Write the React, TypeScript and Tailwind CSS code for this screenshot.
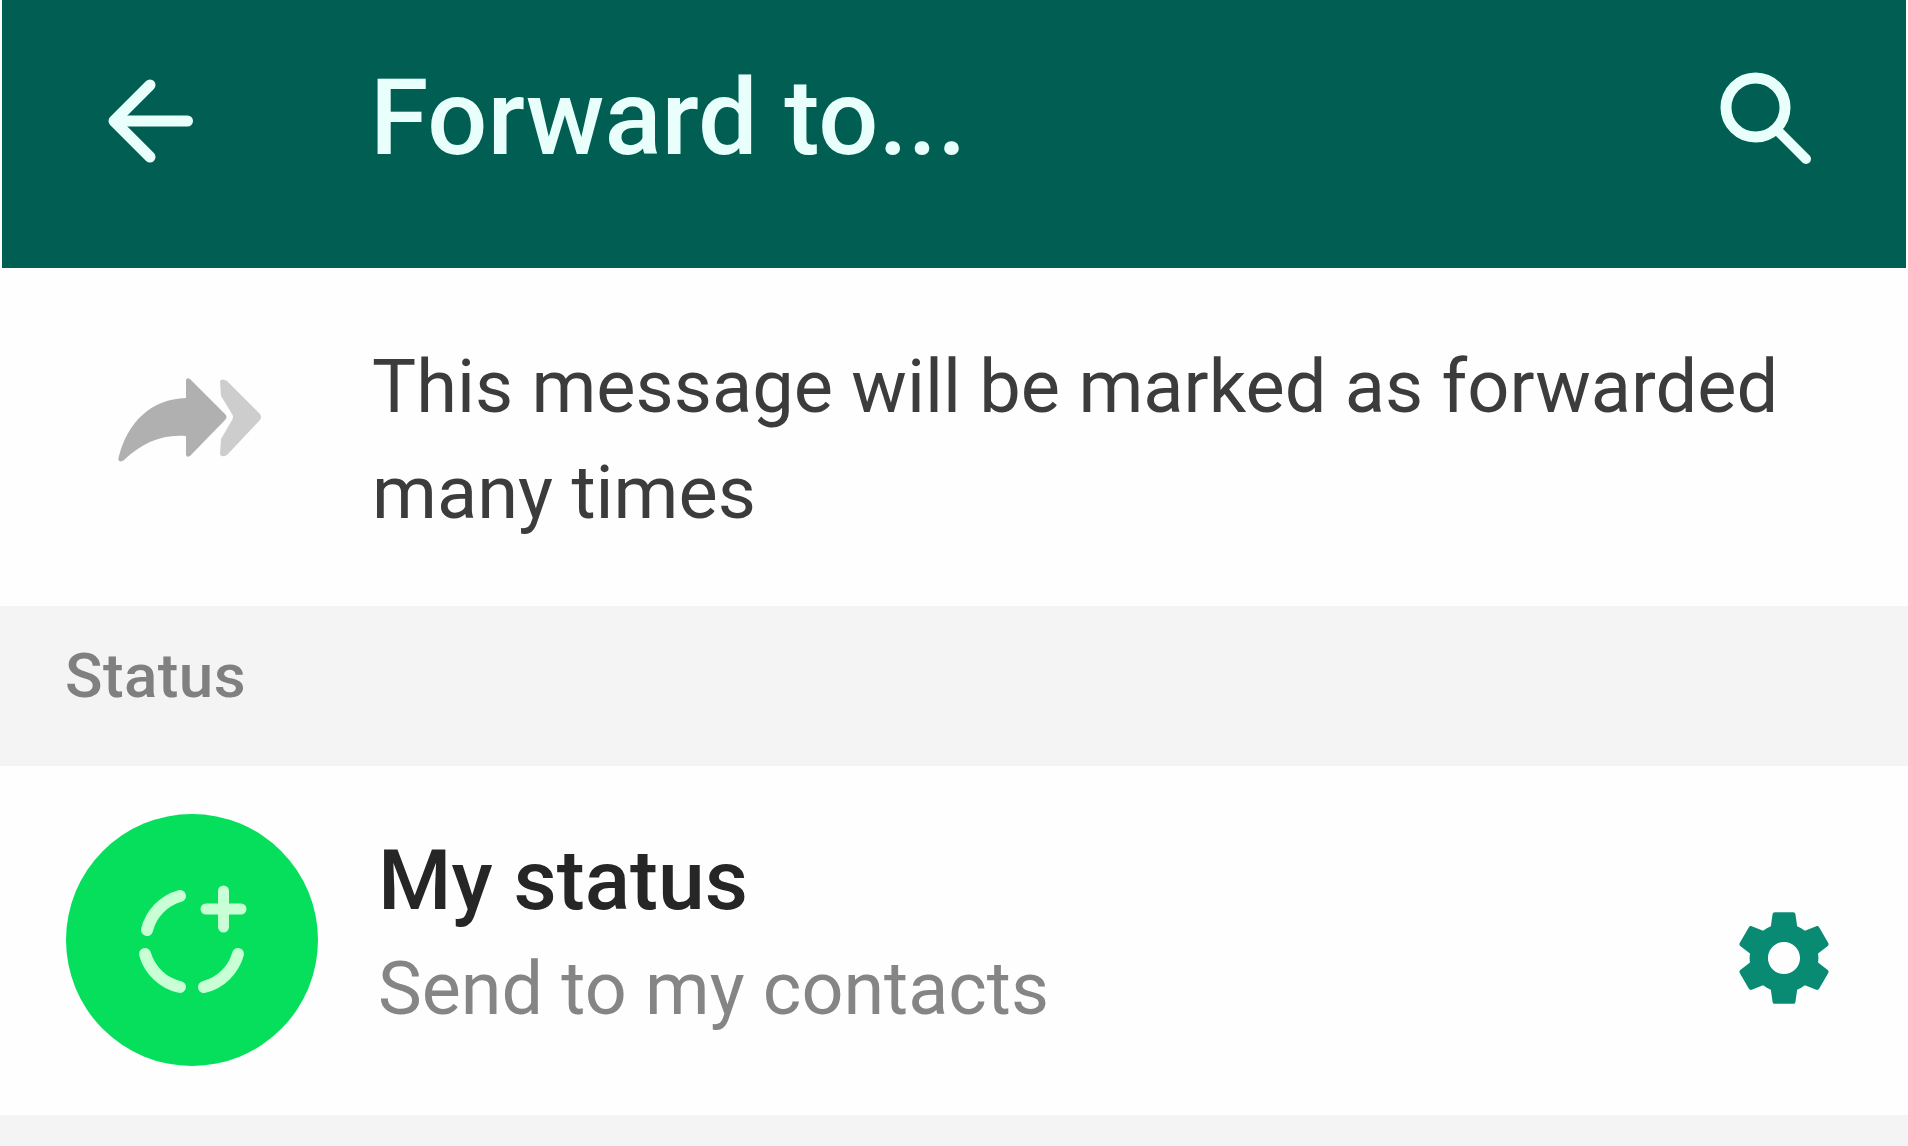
import type { ReactNode } from 'react';

function BackIcon() {
  return (
    <svg
      viewBox="0 0 96 96"
      className="w-[96px] h-[96px] shrink-0"
      fill="none"
      stroke="currentColor"
      strokeWidth="11"
    >
      <path d="M84.5 48H14" strokeLinecap="round" />
      <path d="M47 12 11 48l36 36" strokeLinejoin="round" strokeLinecap="round" />
    </svg>
  );
}

function SearchIcon() {
  return (
    <svg
      viewBox="0 0 100 100"
      className="w-[100px] h-[100px] shrink-0"
      fill="none"
      stroke="currentColor"
      strokeWidth="11"
    >
      <circle cx="39.5" cy="39.5" r="29.5" />
      <path d="m61 62 29 29" strokeWidth="10" strokeLinecap="round" />
    </svg>
  );
}

function ForwardedManyIcon() {
  return (
    <svg viewBox="0 0 150 90" className="w-[150px] h-[90px] shrink-0">
      <path
        d="M71 6Q72 3 75 5L110 40Q113 43 110 46L75 82Q72 84 71 81V62C48 60 28 68 9 86 5 89 2 87 4 82 13 48 36 25 71 24Z"
        fill="#b0b0b0"
      />
      <path
        d="M105 7Q107 4 112 7L145 40Q147 43 145 46L112 81Q106 84 105 80L106 65 117 46Q119 43 117 40L106 22Z"
        fill="#cdcdcd"
      />
    </svg>
  );
}

function StatusIcon() {
  return (
    <svg
      viewBox="0 0 110 110"
      className="w-[110px] h-[110px]"
      fill="none"
      stroke="currentColor"
      strokeWidth="12"
      strokeLinecap="round"
    >
      <path d="M10 45A47 47 0 0 1 43 11" />
      <path d="M8 69A47 47 0 0 0 43 102" />
      <path d="M67 102A47 47 0 0 0 101 69" />
      <path d="M86.5 6v36M69 24h35" strokeWidth="11" />
    </svg>
  );
}

function GearIcon() {
  return (
    <svg viewBox="0 0 24 24" className="w-[110px] h-[110px] shrink-0" fill="currentColor">
      <path d="M19.43 12.98c.04-.32.07-.64.07-.98s-.03-.66-.07-.98l2.11-1.65c.19-.15.24-.42.12-.64l-2-3.46c-.12-.22-.39-.3-.61-.22l-2.49 1c-.52-.4-1.08-.73-1.69-.98l-.38-2.65C14.46 2.18 14.25 2 14 2h-4c-.25 0-.46.18-.49.42l-.38 2.65c-.61.25-1.17.59-1.69.98l-2.49-1c-.23-.09-.49 0-.61.22l-2 3.46c-.13.22-.07.49.12.64l2.11 1.65c-.04.32-.07.65-.07.98s.03.66.07.98l-2.11 1.65c-.19.15-.24.42-.12.64l2 3.46c.12.22.39.3.61.22l2.49-1c.52.4 1.08.73 1.69.98l.38 2.65c.03.24.24.42.49.42h4c.25 0 .46-.18.49-.42l.38-2.65c.61-.25 1.17-.59 1.69-.98l2.49 1c.23.09.49 0 .61-.22l2-3.46c.12-.22.07-.49-.12-.64l-2.11-1.65zM12 15.5c-1.93 0-3.5-1.57-3.5-3.5s1.57-3.5 3.5-3.5 3.5 1.57 3.5 3.5-1.57 3.5-3.5 3.5z" />
    </svg>
  );
}

function SectionHeader({ children }: { children: ReactNode }) {
  return (
    <h2 className="h-[160px] shrink-0 bg-[#f4f4f4] pl-[65px] pt-[40px] text-[62px] leading-[60px] tracking-[0.4px] font-medium text-[#808080]">
      {children}
    </h2>
  );
}

export default function App() {
  return (
    <div className="flex flex-col w-full h-screen overflow-hidden bg-[#fefefe] font-['Roboto',sans-serif] whitespace-nowrap">
      {/* App bar */}
      <header className="mx-[2px] h-[268px] shrink-0 flex items-start bg-[#005f52] text-[#e9fffc]">
        <button aria-label="Back" className="ml-[101px] mt-[73px]">
          <BackIcon />
        </button>
        <h1 className="ml-[171px] mt-[64px] text-[106px] leading-[108px] font-medium">
          Forward to...
        </h1>
        <button aria-label="Search" className="ml-auto mr-[90px] mt-[68px]">
          <SearchIcon />
        </button>
      </header>

      {/* Forwarding notice */}
      <section className="h-[338px] shrink-0 flex items-start">
        <div className="ml-[115px] mt-[106px]">
          <ForwardedManyIcon />
        </div>
        <p className="ml-[107px] mt-[66px] text-[74px] leading-[106px] text-[#3c3c3c]">
          This message will be marked as forwarded
          <br />
          many times
        </p>
      </section>

      <SectionHeader>Status</SectionHeader>

      {/* My status */}
      <section className="h-[349px] shrink-0 flex items-start">
        <div className="ml-[66px] mt-[48px] w-[252px] h-[252px] shrink-0 rounded-full bg-[#05df5c] text-[#c8ffd5] flex items-center justify-center">
          <StatusIcon />
        </div>
        <div className="ml-[60px] mt-[65px]">
          <div className="text-[84px] leading-[100px] font-medium text-[#262626]">My status</div>
          <div className="mt-[8px] text-[73.7px] leading-[100px] text-[#858585]">
            Send to my contacts
          </div>
        </div>
        <button aria-label="Status privacy" className="ml-auto mr-[69px] mt-[137px] text-[#088a73]">
          <GearIcon />
        </button>
      </section>

      <div className="flex-1 bg-[#f4f4f4]" />
    </div>
  );
}
